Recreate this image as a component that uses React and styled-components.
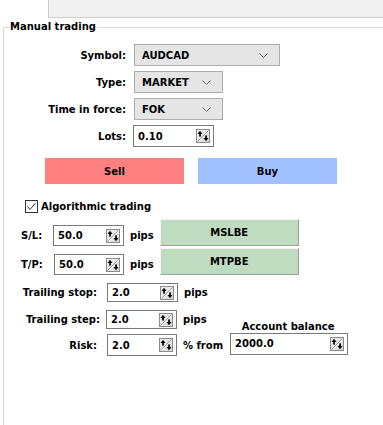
import styled, { createGlobalStyle } from "styled-components";

const GlobalStyle = createGlobalStyle`
	html, body {
		margin: 0;
		background: #ffffff;
	}
	body {
		font-family: "DejaVu Sans", Tahoma, sans-serif;
		font-size: 10px;
		font-weight: bold;
		color: #000000;
	}
`;

function SpinIcon() {
	return (
		<svg width="14" height="14" viewBox="0 0 14 14">
			<defs>
				<linearGradient id="spinFill" x1="0" y1="0" x2="1" y2="1">
					<stop offset="0" stopColor="#f4f4f4" />
					<stop offset="1" stopColor="#d6d6d6" />
				</linearGradient>
			</defs>
			<rect x="0.5" y="0.5" width="13" height="13" fill="url(#spinFill)" stroke="#8c8c8c" />
			<line x1="1.5" y1="12.5" x2="12.5" y2="1.5" stroke="#9a9a9a" />
			<line x1="2.5" y1="12.5" x2="12.5" y2="2.5" stroke="#ffffff" />
			<path d="M1.5 5 L4 1.8 L6.5 5 Z" fill="#000" />
			<rect x="3.2" y="4" width="1.7" height="3.6" fill="#000" />
			<path d="M7.5 9 L10 12.2 L12.5 9 Z" fill="#000" />
			<rect x="9.2" y="6.4" width="1.7" height="3.6" fill="#000" />
		</svg>
	);
}

function Chevron() {
	return (
		<svg width="9" height="5" viewBox="0 0 9 5">
			<polyline points="0.5,0.5 4.5,4.5 8.5,0.5" fill="none" stroke="#6a6a6a" strokeWidth="1" />
		</svg>
	);
}

function Combo({ value, width }) {
	return (
		<ComboBox $w={width}>
			<span>{value}</span>
			<Chevron />
		</ComboBox>
	);
}

function Spin({ value, width, height }) {
	return (
		<SpinBox $w={width} $h={height}>
			<span>{value}</span>
			<SpinIcon />
		</SpinBox>
	);
}

function App() {
	return (
		<>
			<GlobalStyle />
			<Page>
				<TopBar />
				<Group>
					<Legend>Manual trading</Legend>
					<ManualGrid>
						<FormLabel>Symbol:</FormLabel>
						<Combo value="AUDCAD" width={146} />
						<FormLabel>Type:</FormLabel>
						<Combo value="MARKET" width={89} />
						<FormLabel>Time in force:</FormLabel>
						<Combo value="FOK" width={89} />
						<FormLabel>Lots:</FormLabel>
						<LotsCell>
							<Spin value="0.10" width={81} height={22} />
						</LotsCell>
					</ManualGrid>

					<TradeButtons>
						<TradeButton $bg="#ff8080">Sell</TradeButton>
						<TradeButton $bg="#a0c0ff">Buy</TradeButton>
					</TradeButtons>

					<CheckRow>
						<CheckBox>
							<svg width="11" height="11" viewBox="0 0 11 11">
								<polyline points="1.5,5.5 4,8.5 9.5,2" fill="none" stroke="#333" strokeWidth="1" />
							</svg>
						</CheckBox>
						Algorithmic trading
					</CheckRow>

					<LevelRow $top={6}>
						<LevelLabel $w={32}>S/L:</LevelLabel>
						<Spin value="50.0" width={71} height={21} />
						<Unit>pips</Unit>
						<BreakEven>MSLBE</BreakEven>
					</LevelRow>
					<LevelRow $top={2}>
						<LevelLabel $w={33}>T/P:</LevelLabel>
						<Spin value="50.0" width={70} height={21} />
						<Unit>pips</Unit>
						<BreakEven>MTPBE</BreakEven>
					</LevelRow>

					<TrailRow $top={7}>
						<TrailLabel $w={93}>Trailing stop:</TrailLabel>
						<Spin value="2.0" width={71} height={19} />
						<Unit>pips</Unit>
					</TrailRow>
					<TrailRow $top={6}>
						<TrailLabel $w={96} $gap={6}>Trailing step:</TrailLabel>
						<Spin value="2.0" width={71} height={19} />
						<Unit>pips</Unit>
						<AccountLabel>Account balance</AccountLabel>
					</TrailRow>
					<TrailRow $top={4}>
						<TrailLabel $w={93}>Risk:</TrailLabel>
						<Spin value="2.0" width={70} height={22} />
						<Unit>% from</Unit>
						<AccountSpin>
							<Spin value="2000.0" width={118} height={22} />
						</AccountSpin>
					</TrailRow>
				</Group>
			</Page>
		</>
	);
}

export default App;

const Page = styled.div`
	width: 383px;
	height: 425px;
	overflow: hidden;
	display: flex;
	flex-direction: column;
`;

const TopBar = styled.div`
	margin-left: 48px;
	height: 17px;
	background: #f0f0f0;
	border-left: 1px solid #cfcfcf;
	border-bottom: 1px solid #cfcfcf;
	flex-shrink: 0;
`;

const Group = styled.fieldset`
	flex: 1;
	margin: 3px 0 0 3px;
	padding: 0;
	min-width: 0;
	border: none;
	border-top: 1px solid #d8d8d8;
	border-left: 1px solid #d8d8d8;
`;

const Legend = styled.legend`
	margin-left: 5px;
	padding: 0 1px;
	line-height: 12px;
	font-size: 10px;
`;

const ManualGrid = styled.div`
	display: grid;
	grid-template-columns: 122px auto;
	column-gap: 8px;
	row-gap: 5px;
	align-items: center;
	justify-items: start;
	margin-top: 11px;
`;

const FormLabel = styled.div`
	justify-self: end;
	white-space: nowrap;
`;

const ComboBox = styled.div`
	box-sizing: border-box;
	width: ${(p) => p.$w}px;
	height: 22px;
	background: #e5e5e5;
	border: 1px solid #adadad;
	display: flex;
	align-items: center;
	justify-content: space-between;
	padding: 0 11px 0 7px;
`;

const LotsCell = styled.div`
	margin-left: -1px;
`;

const SpinBox = styled.div`
	box-sizing: border-box;
	width: ${(p) => p.$w}px;
	height: ${(p) => p.$h}px;
	background: #ffffff;
	border: 1px solid #7a7a7a;
	display: flex;
	align-items: center;
	justify-content: space-between;
	padding: 0 3px 0 4px;
	flex-shrink: 0;
`;

const TradeButtons = styled.div`
	display: flex;
	gap: 14px;
	margin: 11px 0 0 41px;
`;

const TradeButton = styled.div`
	width: 139px;
	height: 26px;
	background: ${(p) => p.$bg};
	display: flex;
	align-items: center;
	justify-content: center;
`;

const CheckRow = styled.div`
	display: flex;
	align-items: center;
	gap: 3px;
	margin: 15px 0 0 21px;
	height: 14px;
	font-size: 10px;
`;

const CheckBox = styled.div`
	box-sizing: border-box;
	width: 13px;
	height: 13px;
	border: 1px solid #333333;
	background: #ffffff;
	display: flex;
	align-items: center;
	justify-content: center;
`;

const LevelRow = styled.div`
	display: flex;
	align-items: flex-end;
	margin: ${(p) => p.$top}px 0 0 17px;
`;

const LevelLabel = styled.div`
	width: ${(p) => p.$w}px;
	align-self: flex-end;
	line-height: 21px;
`;

const Unit = styled.div`
	margin-left: 6px;
	line-height: 21px;
	white-space: nowrap;
`;

const BreakEven = styled.div`
	box-sizing: border-box;
	width: 139px;
	height: 27px;
	margin-left: 6px;
	background: #c0dcc0;
	border-top: 1px solid #f2f2f2;
	border-left: 1px solid #f2f2f2;
	border-right: 1px solid #a0a0a0;
	border-bottom: 1px solid #a0a0a0;
	display: flex;
	align-items: center;
	justify-content: center;
`;

const TrailRow = styled.div`
	display: flex;
	align-items: center;
	margin-top: ${(p) => p.$top}px;
`;

const TrailLabel = styled.div`
	width: ${(p) => p.$w}px;
	margin-right: ${(p) => p.$gap || 10}px;
	text-align: right;
	white-space: nowrap;
`;

const AccountLabel = styled.div`
	margin-left: 35px;
	align-self: flex-end;
	margin-bottom: -2px;
	white-space: nowrap;
`;

const AccountSpin = styled.div`
	margin: -3px 0 0 7px;
`;
